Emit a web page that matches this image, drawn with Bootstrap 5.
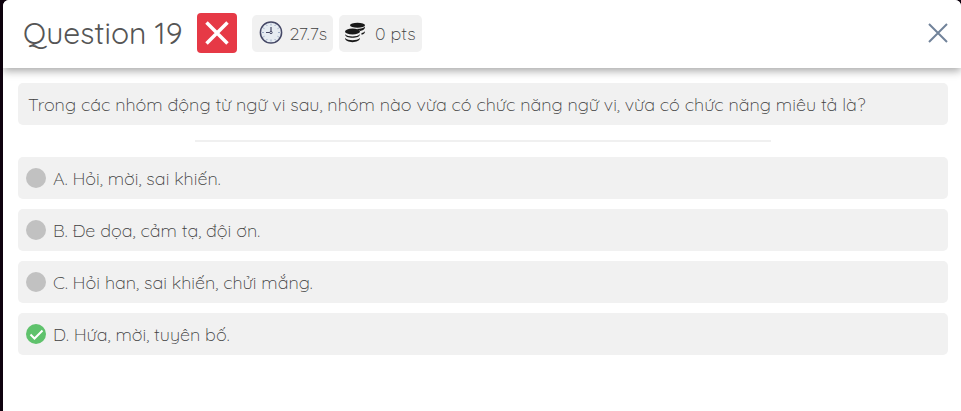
<!DOCTYPE html>
<html lang="vi">
<head>
<meta charset="utf-8">
<meta name="viewport" content="width=device-width, initial-scale=1">
<title>Question 19</title>
<link href="https://cdn.jsdelivr.net/npm/bootstrap@5.3.0/dist/css/bootstrap.min.css" rel="stylesheet">
<style>
  body { background: #0e020e; color: #404040; font-family: Quicksand, Inter, "Noto Sans", sans-serif; font-weight: 300; font-size: 18px; line-height: 24px; }
  .panel { margin-left: 3px; border-radius: 6px 6px 0 0; }
  .panel-head { padding: 13px 8px 15px 20px; box-shadow: 0 3px 9px rgba(0,0,0,.35); border-radius: 6px 6px 0 0; }
  .panel-head h1 { font-size: 30px; line-height: 40px; font-weight: 400; color: #555; margin-right: 15px; }
  .result { width: 40px; height: 40px; border-radius: 4px; background: #e63946; margin-right: 15px; }
  .pill { height: 37px; padding: 0 6px 0 7px; gap: 6px; border-radius: 5px; background: #f1f1f1; }
  .pill + .pill { margin-left: 6px; padding-left: 5px; gap: 9px; }
  .pill span { padding-top: 2px; }
  .panel-body { padding: 15px 13px 16px 15px; }
  .strip { min-height: 42px; padding: 10px 10px 8px; border-radius: 5px; background: #f1f1f1; }
  .divider { width: 62%; height: 2px; margin: 15px auto; background: #f0f0f0; border: 0; opacity: 1; }
  .answers { gap: 10px; }
  .answer { padding: 9px 8px; gap: 7px; }
  .answer label { padding-top: 2px; line-height: 22px; }
  .form-check-input.dot { width: 20px; height: 20px; margin: 0; background-color: #c1c1c1; border: 0; }
  .form-check-input.dot:checked { background-color: #5fc26c; background-size: 20px 20px; background-image: url("data:image/svg+xml,%3csvg xmlns='http://www.w3.org/2000/svg' viewBox='0 0 20 20'%3e%3cpath d='M4.5 10.5 8.5 14.5 16.5 6.5' fill='none' stroke='white' stroke-width='2'/%3e%3c/svg%3e"); }
</style>
<script src="https://cdn.jsdelivr.net/npm/bootstrap@5.3.0/dist/js/bootstrap.bundle.min.js" defer></script>
</head>
<body>
<main class="panel bg-white min-vh-100">
  <header class="panel-head d-flex align-items-center bg-white">
    <h1 class="mb-0">Question 19</h1>
    <span class="result d-flex align-items-center justify-content-center flex-shrink-0">
      <svg width="24" height="24" viewBox="0 0 24 24" role="img" aria-label="Incorrect"><path d="M1.5 1.5 22.5 22.5M22.5 1.5 1.5 22.5" stroke="#fff" stroke-width="3.5"/></svg>
    </span>
    <div class="pill d-flex align-items-center">
      <svg width="24" height="24" viewBox="0 0 24 24" aria-hidden="true">
        <circle cx="12" cy="11.500" r="10.6" fill="#e6ecf2" stroke="#454866" stroke-width="1.5"/>
        <path d="M12 2.500v2M12 18.500v2M3 11.500h2M19 11.500h2M7.5 3.700l.7 1.3M16.5 3.700l-.7 1.3M4.2 7l1.3.7M19.8 7l-1.3.7M4.2 16l1.3-.7M19.8 16l-1.3-.7M7.5 19.300l.7-1.3M16.5 19.300l-.7-1.3" stroke="#9cacc6" stroke-width="1"/>
        <path d="M12 6v4.500M7 11.500h4" stroke="#454866" stroke-width="1.2"/>
        <circle cx="12" cy="11.500" r="1.2" fill="#e6ecf2" stroke="#454866" stroke-width="1"/>
      </svg>
      <span>27.7s</span>
    </div>
    <div class="pill d-flex align-items-center">
      <svg width="22" height="22" viewBox="0 0 22 22" aria-hidden="true" fill="#191919">
        <ellipse cx="13.5" cy="3.2" rx="7.5" ry="2.5"/>
        <path d="M12 7c5 0 8-1 9-2.5 0 2.5-1 3.5-4.5 4.5zM17.5 11c2-.4 3-1 3.5-2 0 2.2-1 3-3.5 3.8z"/>
        <ellipse cx="8.5" cy="9.5" rx="7.5" ry="3"/>
        <path d="M1 12.2c3 3 12 3 15 0 0 4.8-15 4.8-15 0zM1 16c3 3 12 3 15 0 0 5.5-15 5.5-15 0z"/>
      </svg>
      <span>0 pts</span>
    </div>
    <button type="button" class="btn border-0 p-1 ms-auto d-flex" aria-label="Close">
      <svg width="22" height="22" viewBox="0 0 22 22" aria-hidden="true"><path d="M2 2 20 20M20 2 2 20" stroke="#71839a" stroke-width="2"/></svg>
    </button>
  </header>
  <div class="panel-body">
    <div class="strip" id="prompt">Trong các nhóm động từ ngữ vi sau, nhóm nào vừa có chức năng ngữ vi, vừa có chức năng miêu tả là?</div>
    <hr class="divider">
    <div class="answers d-flex flex-column" role="radiogroup" aria-labelledby="prompt">
      <div class="strip answer d-flex align-items-center"><input class="form-check-input dot flex-shrink-0" type="radio" name="answer" id="a"><label for="a">A. Hỏi, mời, sai khiến.</label></div>
      <div class="strip answer d-flex align-items-center"><input class="form-check-input dot flex-shrink-0" type="radio" name="answer" id="b"><label for="b">B. Đe dọa, cảm tạ, đội ơn.</label></div>
      <div class="strip answer d-flex align-items-center"><input class="form-check-input dot flex-shrink-0" type="radio" name="answer" id="c"><label for="c">C. Hỏi han, sai khiến, chửi mắng.</label></div>
      <div class="strip answer d-flex align-items-center"><input class="form-check-input dot flex-shrink-0" type="radio" name="answer" id="d" checked><label for="d">D. Hứa, mời, tuyên bố.</label></div>
    </div>
  </div>
</main>
</body>
</html>
